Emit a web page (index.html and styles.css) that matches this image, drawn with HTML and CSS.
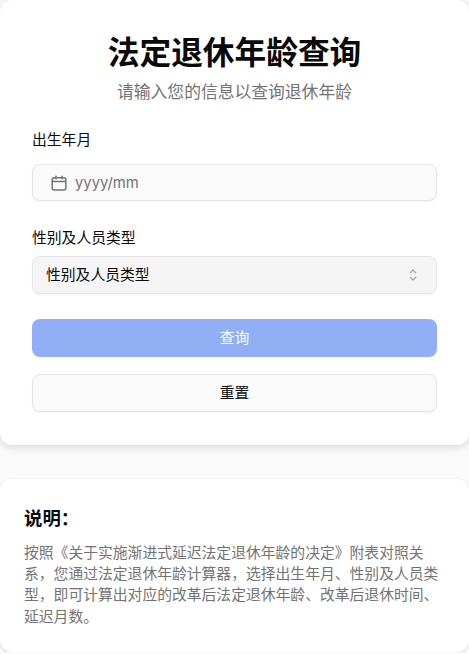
FILE: index.html
```html
<!DOCTYPE html>
<html lang="zh-CN">
<head>
    <meta charset="UTF-8">
    <meta name="viewport" content="width=device-width, initial-scale=1.0">
    <title>法定退休年龄查询</title>
    <link rel="stylesheet" href="styles.css">
</head>
<body>
    <div class="card form-card">
        <h1>法定退休年龄查询</h1>
        <p class="subtitle">请输入您的信息以查询退休年龄</p>

        <div class="field field-date">
            <label for="birth">出生年月</label>
            <div class="date-input">
                <svg class="calendar-icon" viewBox="0 0 16 16" width="16" height="16" fill="none" stroke="currentColor" stroke-width="1.5">
                    <rect x="1.2" y="2.7" width="13.6" height="12.2" rx="2"></rect>
                    <path d="M1.2 6.6h13.6M5 .8v3.4M11 .8v3.4"></path>
                </svg>
                <input type="text" id="birth" placeholder="yyyy/mm">
            </div>
        </div>

        <div class="field field-type">
            <label for="type">性别及人员类型</label>
            <div class="select-box" id="type">
                <span>性别及人员类型</span>
                <svg class="chevrons" viewBox="0 0 10 14" width="10" height="14" fill="none" stroke="currentColor" stroke-width="1.2">
                    <path d="M2 5l3-3 3 3M2 9l3 3 3-3"></path>
                </svg>
            </div>
        </div>

        <button class="btn btn-primary">查询</button>
        <button class="btn btn-reset">重置</button>
    </div>

    <div class="card note-card">
        <h2>说明：</h2>
        <p>按照《关于实施渐进式延迟法定退休年龄的决定》附表对照关系，您通过法定退休年龄计算器，选择出生年月、性别及人员类型，即可计算出对应的改革后法定退休年龄、改革后退休时间、延迟月数。</p>
    </div>
</body>
</html>
```

FILE: styles.css
```css
* {
    margin: 0;
    padding: 0;
    box-sizing: border-box;
    font-family: Inter, "Noto Sans CJK SC", sans-serif;
    text-spacing-trim: space-all;
}

body {
    background-color: #fafafa;
    color: #0a0a0a;
}

.card {
    background-color: #fff;
    border-radius: 12px;
}

.form-card {
    height: 445px;
    padding: 33px 32px 0;
    box-shadow: 0 2px 8px rgba(0, 0, 0, 0.15);
}

h1 {
    font-size: 31.7px;
    line-height: 40px;
    font-weight: 700;
    text-align: center;
}

.subtitle {
    font-size: 16.8px;
    line-height: 24px;
    margin-top: 7px;
    margin-bottom: 26px;
    color: #737373;
    text-align: center;
}

label {
    display: block;
    font-size: 14.8px;
    line-height: 20px;
}

.field-date {
    margin-bottom: 27px;
}

.field-date label {
    margin-bottom: 14px;
}

.field-type {
    margin-bottom: 25px;
}

.field-type label {
    margin-bottom: 8px;
}

.date-input {
    display: flex;
    align-items: center;
    gap: 8px;
    height: 37px;
    padding: 0 18px;
    background-color: #fafafa;
    border: 1px solid #e5e5e5;
    border-radius: 8px;
    box-shadow: 0 1px 2px rgba(0, 0, 0, 0.05);
}

.calendar-icon {
    color: #737373;
}

input {
    flex: 1;
    min-width: 0;
    border: none;
    outline: none;
    background: transparent;
    font-size: 14.8px;
}

input::placeholder {
    color: #737373;
}

.select-box {
    display: flex;
    align-items: center;
    justify-content: space-between;
    height: 38px;
    padding: 0 18px 3px 13px;
    font-size: 14.8px;
    background-color: #f5f5f5;
    border: 1px solid #e5e5e5;
    border-radius: 8px;
    box-shadow: 0 1px 2px rgba(0, 0, 0, 0.05);
}

.chevrons {
    color: #a3a3a3;
    margin-top: 3px;
}

.btn {
    display: block;
    width: 100%;
    padding-bottom: 3px;
    font-size: 14.8px;
    border-radius: 8px;
}

.btn-primary {
    height: 38px;
    margin-bottom: 17px;
    color: #fff;
    background-color: #90aff5;
    border: none;
}

.btn-reset {
    height: 38px;
    color: #0a0a0a;
    background-color: #fafafa;
    border: 1px solid #e5e5e5;
    box-shadow: 0 1px 2px rgba(0, 0, 0, 0.05);
}

.note-card {
    height: 173px;
    margin-top: 34px;
    padding: 25px 24px 0;
    box-shadow: 0 1px 3px rgba(0, 0, 0, 0.15);
}

h2 {
    font-size: 18.4px;
    line-height: 28px;
    font-weight: 700;
    margin-bottom: 11px;
}

.note-card p {
    font-size: 14.8px;
    line-height: 21.2px;
    color: #737373;
}
```
